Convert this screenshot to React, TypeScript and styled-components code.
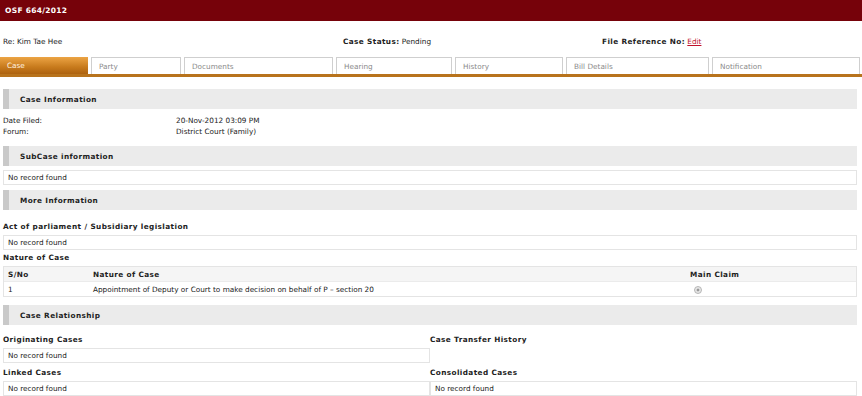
import styled, { createGlobalStyle } from "styled-components";

const GlobalStyle = createGlobalStyle`
  body {
    margin: 0;
    font-family: "DejaVu Sans", Verdana, sans-serif;
    font-size: 7.3px;
    color: #222;
    background: #fff;
  }
  b, strong {
    letter-spacing: 0.4px;
  }
`;

const TitleBar = styled.div`
  height: 21px;
  background: #76020a;
  color: #fff;
  font-weight: bold;
  font-size: 7.5px;
  letter-spacing: 0.3px;
  display: flex;
  align-items: center;
  padding-left: 5px;
`;

const InfoRow = styled.div`
  display: grid;
  grid-template-columns: 340px 259px 1fr;
  height: 36px;
  align-items: center;
  padding: 4px 3px 0;
  box-sizing: border-box;
`;

const EditLink = styled.a`
  color: #c0102a;
  text-decoration: underline;
`;

const TabBar = styled.div`
  display: flex;
  gap: 3px;
  border-bottom: 3px solid #b8731c;
`;

const Tab = styled.div<{ $w: number; $active?: boolean }>`
  width: ${({ $w }) => $w}px;
  height: 17px;
  box-sizing: border-box;
  display: flex;
  align-items: center;
  padding-left: 7px;
  color: ${({ $active }) => ($active ? "#fff2e0" : "#8a8a8a")};
  border: ${({ $active }) => ($active ? "none" : "1px solid #cfcfcf")};
  border-bottom: none;
  background: ${({ $active }) =>
    $active ? "linear-gradient(#eca444, #c77a1c 60%, #ad6210)" : "#fff"};
`;

const Content = styled.div`
  padding: 12px 5px 0 3px;
`;

const SectionHeader = styled.div`
  height: 20px;
  background: #ebebeb;
  border-left: 6px solid #c9c9c9;
  display: flex;
  align-items: center;
  padding-left: 11px;
  font-weight: bold;
  letter-spacing: 0.4px;
`;

const FieldGrid = styled.div`
  display: grid;
  grid-template-columns: 173px 1fr;
  padding: 6px 0 9px;
  line-height: 11px;
`;

const EmptyBox = styled.div<{ $mt?: number }>`
  height: 15px;
  box-sizing: border-box;
  border: 1px solid #e4e4e4;
  display: flex;
  align-items: center;
  padding-left: 4px;
  margin-top: ${({ $mt }) => $mt ?? 0}px;
`;

const Label = styled.div<{ $mt?: number }>`
  font-weight: bold;
  letter-spacing: 0.4px;
  height: 11px;
  display: flex;
  align-items: center;
  margin-top: ${({ $mt }) => $mt ?? 0}px;
  margin-bottom: 3px;
`;

const Spacer = styled.div<{ $h: number }>`
  height: ${({ $h }) => $h}px;
`;

const Table = styled.div`
  border: 1px solid #e4e4e4;
`;

const TableRow = styled.div<{ $head?: boolean }>`
  display: grid;
  grid-template-columns: 85px 597px 1fr;
  height: 14px;
  align-items: center;
  padding-left: 4px;
  font-weight: ${({ $head }) => ($head ? "bold" : "normal")};
  letter-spacing: ${({ $head }) => ($head ? "0.4px" : "0")};
  background: ${({ $head }) => ($head ? "#f5f5f5" : "#fff")};
  border-bottom: ${({ $head }) => ($head ? "1px solid #ebebeb" : "none")};
`;

const Radio = styled.span`
  display: inline-block;
  width: 6px;
  height: 6px;
  border-radius: 50%;
  border: 1px solid #b5b5b5;
  background: radial-gradient(#999 30%, #e8e8e8 40%);
  margin-left: 4px;
  margin-top: 3px;
`;

const TwoCol = styled.div`
  display: grid;
  grid-template-columns: 427px 1fr;
`;

const Col = styled.div``;

const tabs: [string, number][] = [
  ["Case", 88],
  ["Party", 90],
  ["Documents", 149],
  ["Hearing", 116],
  ["History", 108],
  ["Bill Details", 143],
  ["Notification", 148],
];

export default function App() {
  return (
    <>
      <GlobalStyle />
      <TitleBar>OSF 664/2012</TitleBar>
      <InfoRow>
        <div>Re: Kim Tae Hee</div>
        <div>
          <b>Case Status:</b> Pending
        </div>
        <div>
          <b>File Reference No:</b> <EditLink>Edit</EditLink>
        </div>
      </InfoRow>
      <TabBar>
        {tabs.map(([name, w], i) => (
          <Tab key={name} $w={w} $active={i === 0}>
            {name}
          </Tab>
        ))}
      </TabBar>
      <Content>
        <SectionHeader>Case Information</SectionHeader>
        <FieldGrid>
          <div>Date Filed:</div>
          <div>20-Nov-2012 03:09 PM</div>
          <div>Forum:</div>
          <div>District Court (Family)</div>
        </FieldGrid>
        <SectionHeader>SubCase information</SectionHeader>
        <EmptyBox $mt={4}>No record found</EmptyBox>
        <Spacer $h={5} />
        <SectionHeader>More Information</SectionHeader>
        <Label $mt={11}>Act of parliament / Subsidiary legislation</Label>
        <EmptyBox>No record found</EmptyBox>
        <Label $mt={2}>Nature of Case</Label>
        <Table>
          <TableRow $head>
            <div>S/No</div>
            <div>Nature of Case</div>
            <div>Main Claim</div>
          </TableRow>
          <TableRow>
            <div>1</div>
            <div>Appointment of Deputy or Court to make decision on behalf of P – section 20</div>
            <div>
              <Radio />
            </div>
          </TableRow>
        </Table>
        <Spacer $h={8} />
        <SectionHeader>Case Relationship</SectionHeader>
        <Spacer $h={9} />
        <TwoCol>
          <Col>
            <Label>Originating Cases</Label>
            <EmptyBox>No record found</EmptyBox>
            <Label $mt={4}>Linked Cases</Label>
            <EmptyBox>No record found</EmptyBox>
          </Col>
          <Col>
            <Label>Case Transfer History</Label>
            <Spacer $h={15} />
            <Label $mt={4}>Consolidated Cases</Label>
            <EmptyBox>No record found</EmptyBox>
          </Col>
        </TwoCol>
      </Content>
    </>
  );
}
